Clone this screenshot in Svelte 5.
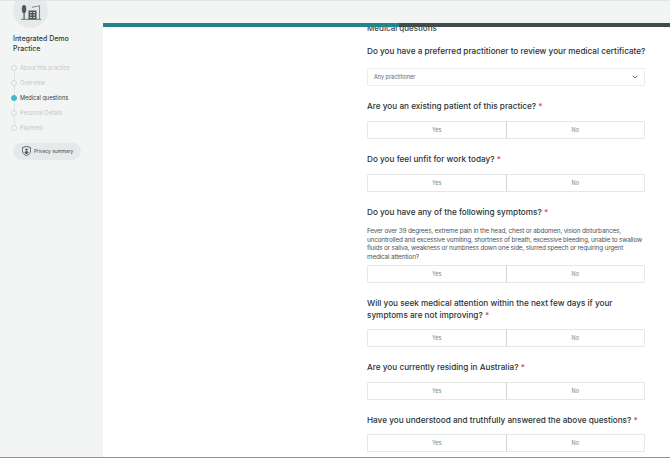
<script>
  const steps = [
    { label: 'About this practice' },
    { label: 'Overview' },
    { label: 'Medical questions', active: true },
    { label: 'Personal Details' },
    { label: 'Payment' }
  ];
  const questions = [
    { id: 'a', title: 'Are you an existing patient of this practice?' },
    { id: 'b', title: 'Do you feel unfit for work today?' },
    {
      id: 'c',
      title: 'Do you have any of the following symptoms?',
      body: 'Fever over 39 degrees, extreme pain in the head, chest or abdomen, vision disturbances, uncontrolled and excessive vomiting, shortness of breath, excessive bleeding, unable to swallow fluids or saliva, weakness or numbness down one side, slurred speech or requiring urgent medical attention?'
    },
    { id: 'd', title: 'Will you seek medical attention within the next few days if your symptoms are not improving?', tight: true },
    { id: 'e', title: 'Are you currently residing in Australia?' },
    { id: 'f', title: 'Have you understood and truthfully answered the above questions?', tight: true }
  ];
</script>

<div class="page">
  <aside class="side">
    <div class="logo">
      <svg width="20" height="15" viewBox="0 0 20 15" fill="none">
        <path d="M3 0c1.500 0 2.300 1.500 2.300 4S4.500 7.800 3.700 8.500V14H2.500V8.500C1.500 7.800.8 6.500.8 4S1.500 0 3 0z" fill="#4b5a5c"/>
        <path d="M0 14.300h20" stroke="#6a7779" stroke-width="1"/>
        <path d="M11 2.200l7.500-1.400v13.500" stroke="#7d898b" stroke-width="1.100"/>
        <rect x="7.500" y="5.500" width="8" height="8.800" fill="#4b5a5c"/>
        <path d="M9 7.500h1.700M12.300 7.500H14M9 10h1.700M12.300 10H14M9 12.500h1.700M12.300 12.500H14" stroke="#e4e8e8" stroke-width="1"/>
      </svg>
    </div>
    <h1>Integrated Demo Practice</h1>
    <ol class="steps">
      {#each steps as s}
        <li class:active={s.active}><span class="dot"></span><span>{s.label}</span></li>
      {/each}
    </ol>
    <div class="privacy">
      <svg width="9" height="10" viewBox="0 0 9 10">
        <path d="M4.500.3L8.600 1.600v3c0 2.500-1.700 4.100-4.100 5.100C2.100 8.700.4 7.100.4 4.600v-3z" fill="none" stroke="#4b5a5c" stroke-width=".9"/>
        <circle cx="4.500" cy="3.600" r="1.200" fill="#4b5a5c"/>
        <path d="M2.500 7c0-1.300 1-2 2-2s2 .7 2 2l-2 1.300z" fill="#4b5a5c"/>
      </svg>
      <span>Privacy summary</span>
    </div>
  </aside>
  <div class="right">
    <div class="top"></div>
    <div class="progress"><div class="fill"></div></div>
    <main class="main">
      <div class="form">
        <h2>Medical questions</h2>
        <h3 class="first">Do you have a preferred practitioner to review your medical certificate?</h3>
        <div class="select">
          <span>Any practitioner</span>
          <svg width="6" height="4" viewBox="0 0 6 4"><path d="M.7.8L3 3l2.300-2.200" fill="none" stroke="#4b5a5c" stroke-width=".9"/></svg>
        </div>
        {#each questions as q}
          <h3>{q.title} <span class="req">*</span></h3>
          {#if q.body}<p>{q.body}</p>{/if}
          <div class="yn" class:tight={q.tight}><button>Yes</button><button>No</button></div>
        {/each}
      </div>
    </main>
  </div>
</div>

<style>
  :global(body) { margin: 0; background: #fff; }
  .page {
    width: 670px; height: 458px; display: flex; overflow: hidden;
    font-family: Inter, "Liberation Sans", sans-serif; color: #2b3436;
    box-sizing: border-box; border-top: 1px solid #e2e5e5; border-bottom: 1px solid #8d9494;
    background: #f3f5f5;
  }
  .side { width: 103px; flex: none; padding-left: 13px; box-sizing: border-box; }
  .logo {
    width: 35px; height: 35px; margin-top: -8px; border-radius: 50%; background: #e6e9ea;
    display: flex; align-items: center; justify-content: center;
  }
  .logo svg { margin-top: 4px; margin-left: 1px; }
  h1 { margin: 6px 0 0; font-size: 7px; line-height: 10px; font-weight: 500; width: 75px; color: #2f3a3c; }
  .steps { list-style: none; margin: 6px 0 0; padding: 0; }
  .steps li {
    height: 15.200px; display: flex; align-items: center; margin-left: -2px;
    font-size: 5.600px; color: #c3c8c9; position: relative;
  }
  .steps li:not(:last-child)::after {
    content: ""; position: absolute; left: 2.500px; top: 10px; width: 1px; height: 11px; background: #dfe3e3;
  }
  .dot { width: 4px; height: 4px; border: 1px solid #d5dada; border-radius: 50%; margin-right: 3px; background: #f3f5f5; position: relative; z-index: 1; }
  .active { color: #343d3f !important; }
  .active .dot { background: #3bbcc6; border-color: #3bbcc6; }
  .privacy {
    margin-top: 7px; width: 68px; height: 17px; border-radius: 9px; background: #e6e9ea;
    display: flex; align-items: center; gap: 3px; padding-left: 9px; box-sizing: border-box;
    font-size: 4.800px; color: #3f4a4c;
  }
  .right { flex: 1; min-width: 0; display: flex; flex-direction: column; position: relative; }
  .top { height: 22px; flex: none; }
  .progress { height: 4px; flex: none; background: #3e4c4e; position: relative; z-index: 2; }
  .fill { width: 296px; height: 100%; background: #24848c; }
  .main { flex: 1; min-height: 0; overflow: hidden; background: #fff; }
  .form { margin-left: 264px; width: 278px; margin-top: -4px; }
  h2 { margin: 0; font-size: 8px; line-height: 10px; font-weight: 500; color: #3a4446; }
  h3 { margin: 14px 0 0; font-size: 8.200px; line-height: 12px; font-weight: 500; color: #2b3436; }
  .first { margin-top: 12px; white-space: nowrap; }
  .req { color: #e0455a; }
  p { margin: 9px 0 0; font-size: 6.400px; line-height: 8.700px; color: #4c5658; letter-spacing: -.175px; }
  .select {
    margin-top: 11px; height: 18px; border: 1px solid #eceeee; border-radius: 1px; box-sizing: border-box;
    display: flex; align-items: center; justify-content: space-between; padding: 0 6px; font-size: 5.500px; color: #5d6668;
  }
  .yn { margin-top: 9px; display: flex; height: 18px; }
  .yn.tight { margin-top: 8px; }
  p + .yn { margin-top: 3px; }
  button {
    flex: 1; border: 1px solid #e6e8e8; background: #fff; font: inherit; font-size: 5.500px; color: #7b8485; padding: 0; border-radius: 1px;
  }
  button + button { border-left: 1px solid #cfd4d4; margin-left: -1px; }
</style>
